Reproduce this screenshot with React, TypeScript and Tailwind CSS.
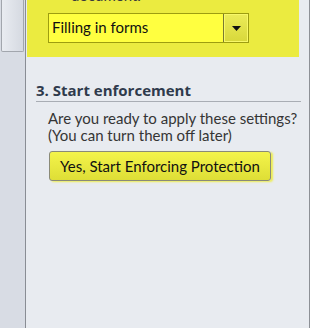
import React from "react";

export default function App() {
  return (
    <div
      className="w-[310px] h-[328px] flex bg-[#e8ebf0] overflow-hidden"
      style={{ fontFamily: 'Lato, "Noto Sans", sans-serif' }}
    >
      {/* scrollbar strip */}
      <div className="w-[25px] shrink-0 h-full bg-[#d8dce4] flex flex-col">
        <div className="ml-[1px] w-[23px] h-[52px] bg-gradient-to-r from-[#e9ecf1] to-[#d5d9e1] border border-[#a2a6ad] border-t-0 rounded-b-[2px]" />
      </div>
      <div className="w-[1px] shrink-0 h-full bg-[#898d94]" />
      <div className="flex-1 min-w-0 flex flex-col">
        <div className="ml-[1px] mr-[10px] h-[57px] bg-[#ebeb40] relative">
          <div className="absolute left-[44px] top-[-14px] text-[15px] leading-[18px] text-[#3a3a3a]">
            document.
          </div>
          <div className="absolute left-[21px] top-[13px] w-[201px] h-[30px] flex border border-[#9d9d10] bg-[#ffff40]">
            <div className="flex-1 flex items-center pl-[3px] pb-[1px] text-[15px] text-[#101010] whitespace-nowrap">
              Filling in forms
            </div>
            <div className="w-[25px] h-full border-l border-[#7a7a30] flex items-center justify-center bg-gradient-to-b from-[#ecec58] to-[#d8d83a] shadow-[inset_0_0_0_1px_#f8f86a]">
              <svg width="9" height="5" viewBox="0 0 9 5">
                <path d="M0 0H9L4.5 5Z" fill="#111" />
              </svg>
            </div>
          </div>
        </div>
        <div className="ml-[10px] mr-[8px] mt-[24px] border-b border-[#a9adb4] pb-[1px]">
          <div
            className="text-[15px] font-bold leading-[19px] text-[#2f3a4c] whitespace-nowrap"
            style={{ fontFamily: '"Open Sans", sans-serif' }}
          >
            3. Start enforcement
          </div>
        </div>
        <div className="ml-[22px] mt-[8px] text-[15px] leading-[17px] text-[#353535] whitespace-nowrap">
          <div>Are you ready to apply these settings?</div>
          <div>(You can turn them off later)</div>
        </div>
        <div className="ml-[23px] mt-[7px] w-[222px] h-[30px] border border-[#8a8a78] rounded-[3px] bg-gradient-to-b from-[#f4f44a] to-[#dede36] flex items-center pl-[10px] text-[15px] text-[#111] whitespace-nowrap shadow-[2px_1px_2px_#eeee50]">
          Yes, Start Enforcing Protection
        </div>
      </div>
      <div className="w-[1px] shrink-0 h-full bg-[#8d9096]" />
    </div>
  );
}
